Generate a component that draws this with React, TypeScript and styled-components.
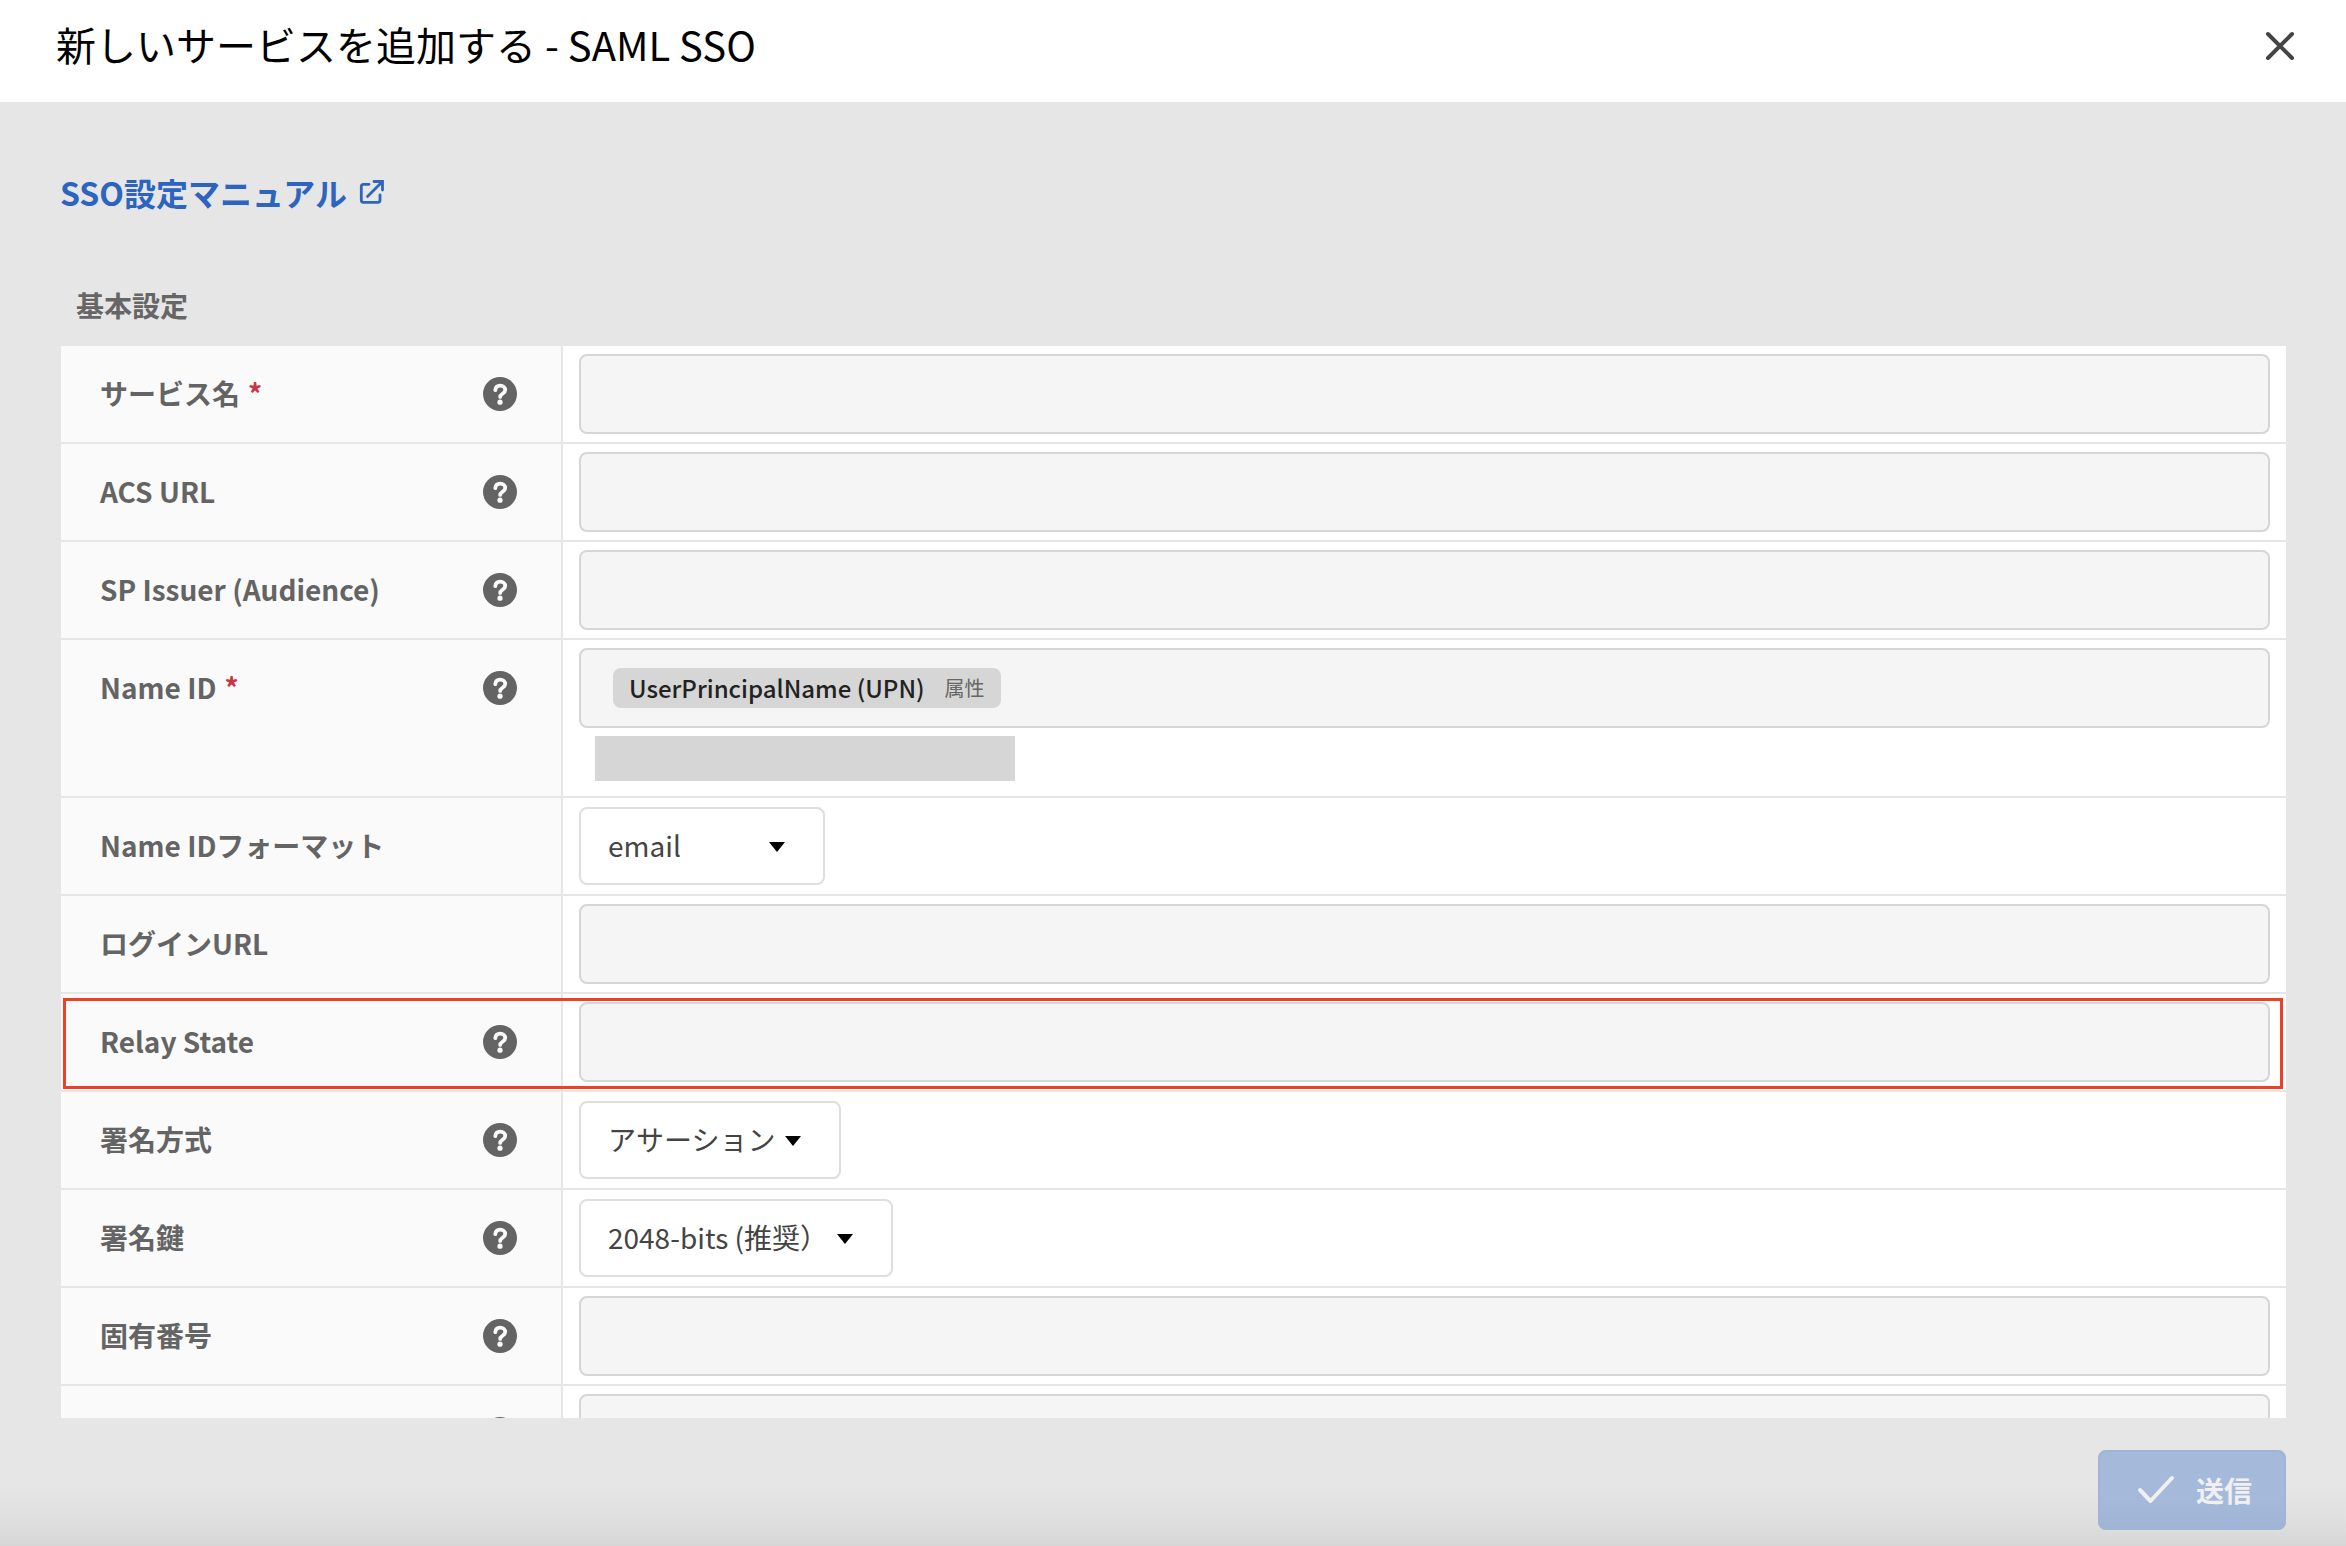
import { useId } from 'react';
import type { ReactNode } from 'react';
import styled, { createGlobalStyle, css } from 'styled-components';

const GlobalStyle = createGlobalStyle`
  *, *::before, *::after { box-sizing: border-box; }
  body {
    margin: 0;
    background: #e6e6e6;
    color: #444;
    font-family: "Noto Sans CJK JP", "Noto Sans", sans-serif;
  }
  button, input, select { font: inherit; }
`;

const Dialog = styled.form`
  display: flex;
  flex-direction: column;
  height: 100vh;
  background: #e6e6e6;
`;

const Header = styled.header`
  display: flex;
  align-items: center;
  justify-content: space-between;
  padding: 14px 44px 28px 56px;
  background: #fff;
`;

const Title = styled.h1`
  margin: 0;
  font-size: 40px;
  font-weight: 400;
  line-height: 60px;
  color: #000;
`;

const CloseButton = styled.button`
  display: flex;
  padding: 8px 4px 4px;
  border: 0;
  background: none;
  color: #444;
`;

const Body = styled.main`
  display: flex;
  flex: 1;
  flex-direction: column;
  min-height: 0;
  padding: 66px 60px 0;
`;

const ManualLink = styled.a`
  display: flex;
  align-self: flex-start;
  align-items: center;
  gap: 10px;
  color: #2c64bf;
  font-size: 32px;
  font-weight: 700;
  line-height: 48px;
  text-decoration: none;
`;

const SectionTitle = styled.h2`
  margin: 69px 16px 21px;
  color: #666;
  font-size: 28px;
  font-weight: 700;
  line-height: 40px;
`;

const Rows = styled.div`
  flex: 1;
  min-height: 0;
  margin-left: 1px;
  overflow: hidden;
  background: #fff;
`;

const Row = styled.div<{ $highlight?: boolean }>`
  position: relative;
  display: grid;
  grid-template-columns: 502px 1fr;
  border-bottom: 2px solid #e6e6e6;
  ${({ $highlight }) =>
    $highlight &&
    css`
      &::after {
        content: '';
        position: absolute;
        inset: 4px 3px 1px 2px;
        border: 3px solid #ee4024;
        pointer-events: none;
      }
    `}
`;

const LabelCell = styled.div`
  display: flex;
  align-items: flex-start;
  justify-content: space-between;
  padding: 27px 44px 27px 39px;
  border-right: 2px solid #e6e6e6;
  background: #fafafa;
`;

const Label = styled.label`
  color: #646464;
  font-size: 28px;
  font-weight: 700;
  line-height: 40px;
`;

const Required = styled.span`
  margin-left: 8px;
  color: #cc3344;
`;

const HelpButton = styled.button`
  display: flex;
  padding: 4px 0;
  border: 0;
  background: none;
  color: #646464;
`;

const FieldCell = styled.div`
  display: flex;
  flex-direction: column;
  align-items: flex-start;
  justify-content: center;
  min-height: 96px;
  padding: 8px 16px;
`;

const fieldBox = css`
  width: 100%;
  height: 80px;
  border: 2px solid #d6d6d6;
  border-radius: 8px;
  background: #f5f5f5;
`;

const TextInput = styled.input`
  ${fieldBox}
  padding: 0 32px;
  color: #444;
  font-size: 28px;
`;

const TokenBox = styled.div`
  ${fieldBox}
  display: flex;
  align-items: center;
  padding: 0 32px;
`;

const Token = styled.span`
  display: flex;
  align-items: center;
  gap: 20px;
  height: 40px;
  padding: 0 16px;
  border-radius: 8px;
  background: #d6d6d6;
  color: #222;
  font-size: 24px;
  font-weight: 500;
  line-height: 40px;
`;

const TokenKind = styled.small`
  color: #666;
  font-size: 20px;
  font-weight: 400;
`;

const TokenInput = styled.input`
  flex: 1;
  min-width: 0;
  border: 0;
  background: none;
  outline: none;
`;

const Preview = styled.div`
  width: 420px;
  height: 45px;
  margin: 8px 16px 7px;
  background: #d6d6d6;
`;

const SelectWrap = styled.div`
  display: grid;
  align-items: center;
`;

const Select = styled.select<{ $width: number }>`
  grid-area: 1 / 1;
  width: ${({ $width }) => $width}px;
  height: 78px;
  padding: 0 56px 2px 27px;
  border: 2px solid #dedede;
  border-radius: 8px;
  appearance: none;
  background: #fff;
  color: #444;
  font-size: 28px;
`;

const Caret = styled.svg`
  grid-area: 1 / 1;
  justify-self: end;
  width: 16px;
  height: 10px;
  margin: 2px 40px 0 0;
  pointer-events: none;
`;

const Footer = styled.footer`
  display: flex;
  justify-content: flex-end;
  padding: 32px 60px 16px;
  background: linear-gradient(to bottom, #e6e6e6 50%, #e0e0e0 78%, #d6d6d6);
`;

const SubmitButton = styled.button`
  display: flex;
  align-items: center;
  gap: 20px;
  height: 80px;
  padding: 0 32px 0 36px;
  border: 2px solid #9fb4d6;
  border-radius: 8px;
  background: linear-gradient(to bottom, #a5b9db 60%, #a0b4d6);
  color: #f0f0f0;
  font-size: 28px;
  font-weight: 700;
`;

const CloseIcon = () => (
  <svg width="36" height="36" viewBox="0 0 36 36" fill="none" stroke="currentColor" strokeWidth="4" strokeLinecap="round" aria-hidden="true">
    <path d="M6 6l24 24M30 6L6 30" />
  </svg>
);

const ExternalIcon = () => (
  <svg width="28" height="28" viewBox="0 0 28 28" fill="none" stroke="currentColor" strokeWidth="2.800" strokeLinecap="round" aria-hidden="true">
    <path d="M12 6.300H6.300a2 2 0 0 0-2 2v14a2 2 0 0 0 2 2H21a2 2 0 0 0 2-2V17" strokeLinejoin="round" />
    <path d="M17 3.500h8.500V12M25 4L10.500 18.500" />
  </svg>
);

const HelpIcon = () => (
  <svg width="34" height="34" viewBox="0 0 34 34" aria-hidden="true">
    <circle cx="17" cy="17" r="17" fill="currentColor" />
    <path d="M12.300 13.200c.3-3 2.300-4.500 4.900-4.500 2.900 0 5 1.700 5 4.300 0 3.700-5 3.800-5 6.900" fill="none" stroke="#fafafa" strokeWidth="3.800" strokeLinecap="round" />
    <circle cx="17" cy="25.200" r="2.600" fill="#fafafa" />
  </svg>
);

const CheckIcon = () => (
  <svg width="40" height="32" viewBox="0 0 40 32" fill="none" stroke="currentColor" strokeWidth="4" strokeLinecap="round" strokeLinejoin="round" aria-hidden="true">
    <path d="M4 16l10.500 11L36 4" />
  </svg>
);

interface FieldRowProps {
  label: string;
  required?: boolean;
  help?: boolean;
  highlight?: boolean;
  children: (id: string) => ReactNode;
}

const FieldRow = ({ label, required, help, highlight, children }: FieldRowProps) => {
  const id = useId();
  return (
    <Row $highlight={highlight}>
      <LabelCell>
        <Label htmlFor={id}>
          {label}
          {required && <Required>*</Required>}
        </Label>
        {help && (
          <HelpButton type="button" aria-label="ヘルプ">
            <HelpIcon />
          </HelpButton>
        )}
      </LabelCell>
      <FieldCell>{children(id)}</FieldCell>
    </Row>
  );
};

const textField = (id: string) => <TextInput id={id} type="text" />;

const selectField = (option: string, width: number) => (id: string) => (
  <SelectWrap>
    <Select id={id} $width={width}>
      <option>{option}</option>
    </Select>
    <Caret viewBox="0 0 16 10" aria-hidden="true">
      <path d="M0 0h16L8 10z" fill="#000" />
    </Caret>
  </SelectWrap>
);

export default function App() {
  return (
    <>
      <GlobalStyle />
      <Dialog onSubmit={(e) => e.preventDefault()}>
        <Header>
          <Title>新しいサービスを追加する - SAML SSO</Title>
          <CloseButton type="button" aria-label="閉じる">
            <CloseIcon />
          </CloseButton>
        </Header>
        <Body>
          <ManualLink href="#manual">
            SSO設定マニュアル
            <ExternalIcon />
          </ManualLink>
          <SectionTitle>基本設定</SectionTitle>
          <Rows>
            <FieldRow label="サービス名" required help>{textField}</FieldRow>
            <FieldRow label="ACS URL" help>{textField}</FieldRow>
            <FieldRow label="SP Issuer (Audience)" help>{textField}</FieldRow>
            <FieldRow label="Name ID" required help>
              {(id) => (
                <>
                  <TokenBox>
                    <Token>
                      UserPrincipalName (UPN)
                      <TokenKind>属性</TokenKind>
                    </Token>
                    <TokenInput id={id} type="text" />
                  </TokenBox>
                  <Preview />
                </>
              )}
            </FieldRow>
            <FieldRow label="Name IDフォーマット">{selectField('email', 246)}</FieldRow>
            <FieldRow label="ログインURL">{textField}</FieldRow>
            <FieldRow label="Relay State" help highlight>{textField}</FieldRow>
            <FieldRow label="署名方式" help>{selectField('アサーション', 262)}</FieldRow>
            <FieldRow label="署名鍵" help>{selectField('2048-bits (推奨）', 314)}</FieldRow>
            <FieldRow label="固有番号" help>{textField}</FieldRow>
            <FieldRow label="" help>{textField}</FieldRow>
          </Rows>
        </Body>
        <Footer>
          <SubmitButton type="submit">
            <CheckIcon />
            送信
          </SubmitButton>
        </Footer>
      </Dialog>
    </>
  );
}
